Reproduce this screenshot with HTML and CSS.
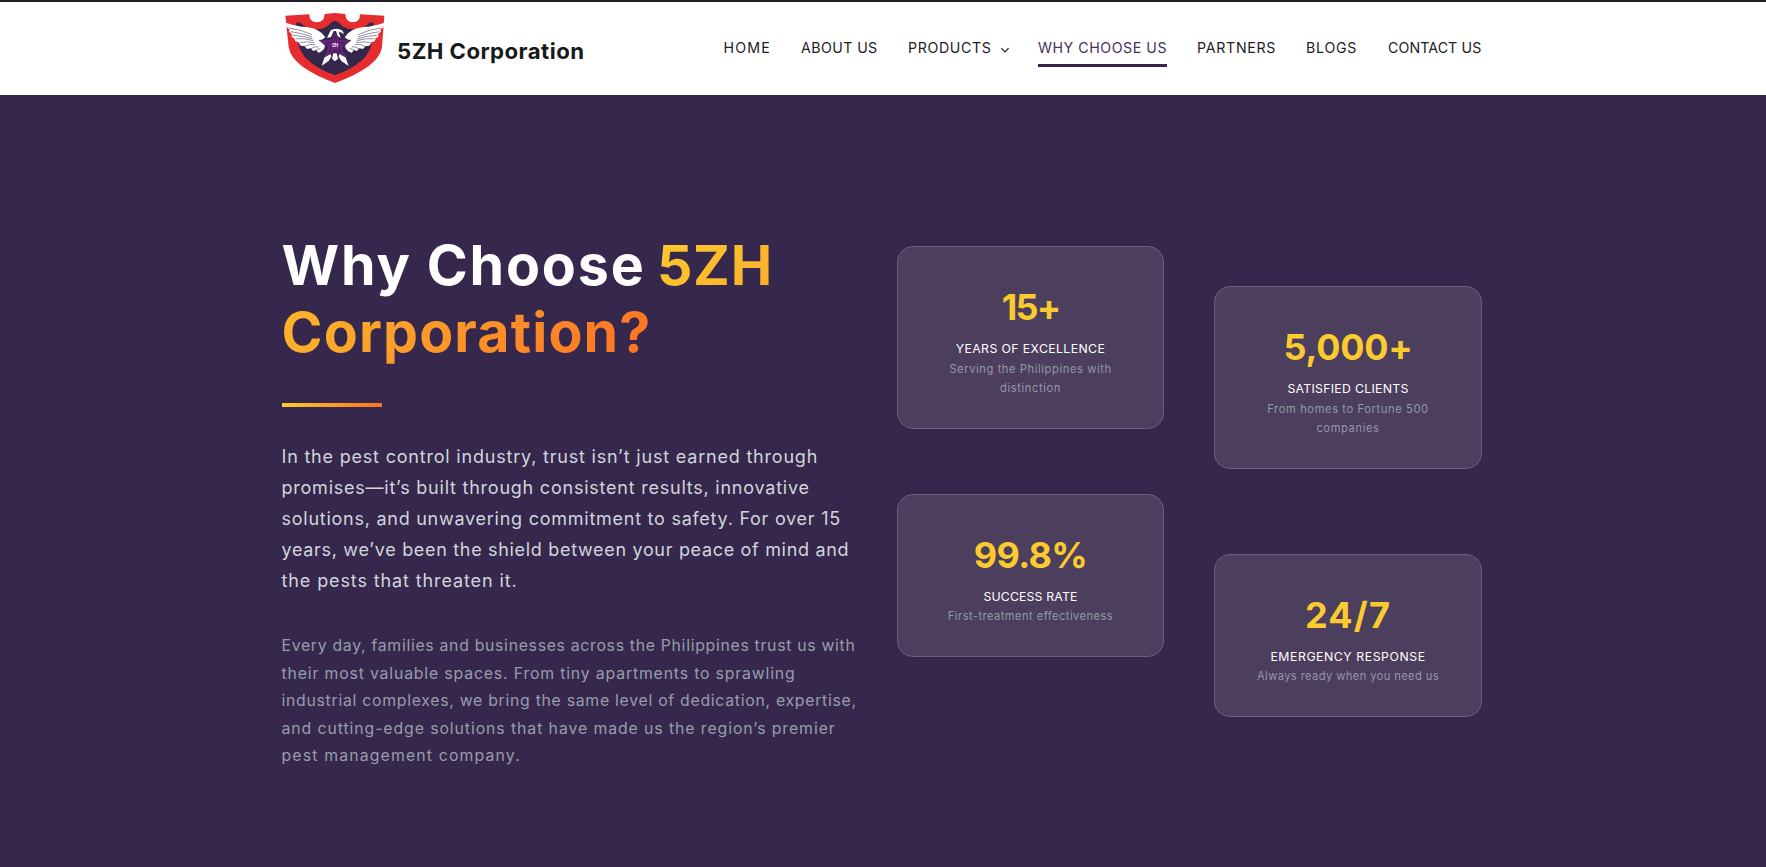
FILE: index.html
```html
<!DOCTYPE html>
<html lang="en">
<head>
<meta charset="utf-8">
<title>Why Choose Us – 5ZH Corporation</title>
<link rel="stylesheet" href="styles.css">
</head>
<body>
<header class="site-header">
  <div class="container header-row">
    <a class="brand">
      <svg class="logo" viewBox="45 39 300 210" aria-hidden="true">
        <path fill="#e52d30" d="M46 47 L118 43 Q118 67 140 67 Q163 67 164 42 L195 39 L226 42 Q227 67 249 67 Q270 67 270 43 L343 47 L336 141 Q328 200 195 249 Q64 200 56 141 Z"/>
        <path fill="#35264b" d="M78 68 L91 68 Q108 87 143 88 Q170 87 184 67 L195 62 L206 67 Q220 87 248 88 Q282 87 298 68 L311 68 L305 128 Q298 187 195 226 Q92 187 85 128 Z"/>
        <g id="wing">
          <path fill="#fff" d="M47 68 Q82 80 110 81 Q151 86 166 112 L156 119 L151 121 L165 138 L162 147 L153 155 L145 158 L138 150 L129 153 L122 145 L111 147 L103 138 L92 137 L85 126 L76 124 L72 114 L64 111 L66 103 L56 94 L60 90 L49 80 Z"/>
          <path class="feather" d="M57 84 Q95 89 126 104 M62 95 Q96 99 126 111 M69 106 Q100 107 128 117 M77 116 Q104 114 130 122 M89 128 Q110 123 132 128 M104 139 Q119 131 136 134 M122 147 Q132 139 145 140 M138 151 Q144 146 151 146"/>
        </g>
        <use href="#wing" transform="translate(390 0) scale(-1 1)"/>
        <path fill="#fff" d="M171 114 L182 91 Q196 82 213 89 Q221 92 221 103 Q215 96 206 96 L212 114 L203 108 L198 93 L191 93 L183 111 Z"/>
        <path fill="#fff" d="M167 162 L182 161 L184 170 L176 183 L155 197 Z M190 160 L200 160 L204 176 L195 184 L186 176 Z M208 161 L223 162 L236 198 L214 183 L206 170 Z"/>
        <path fill="#6f2380" stroke="#35264b" stroke-width="2" d="M195 97 L206 119 L243 121 L216 141 L226 171 L195 154 L164 171 L174 141 L147 121 L184 119 Z"/>
        <path fill="none" stroke="#3f1f56" stroke-width="3" d="M195 108 L201 127 L223 128 L207 140 L213 157 L195 148 L177 157 L183 140 L167 128 L189 127 Z"/>
        <text class="logo-mark" x="195" y="140" text-anchor="middle">ZH</text>
      </svg>
      <span class="brand-name">5ZH Corporation</span>
    </a>
    <nav class="nav">
      <a class="nav-link nav-home">HOME</a>
      <a class="nav-link nav-about">ABOUT US</a>
      <a class="nav-link nav-products">PRODUCTS<svg class="chevron" viewBox="0 0 10 8" aria-hidden="true"><path d="M1.4 2.2 L5 5.8 L8.6 2.2"/></svg></a>
      <a class="nav-link nav-why">WHY CHOOSE US</a>
      <a class="nav-link nav-partners">PARTNERS</a>
      <a class="nav-link nav-blogs">BLOGS</a>
      <a class="nav-link nav-contact">CONTACT US</a>
    </nav>
  </div>
</header>
<main class="hero">
  <div class="container hero-row">
    <section class="intro">
      <h1 class="title"><span class="title-lead">Why Choose</span> <span class="accent"><span class="accent-a">5ZH</span><br><span class="accent-b">Corporation?</span></span></h1>
      <div class="rule"></div>
      <p class="lead">
        <span class="line lead-1">In the pest control industry, trust isn’t just earned through</span>
        <span class="line lead-2">promises—it’s built through consistent results, innovative</span>
        <span class="line lead-3">solutions, and unwavering commitment to safety. For over 15</span>
        <span class="line lead-4">years, we’ve been the shield between your peace of mind and</span>
        <span class="line lead-5">the pests that threaten it.</span>
      </p>
      <p class="body-text">
        <span class="line body-1">Every day, families and businesses across the Philippines trust us with</span>
        <span class="line body-2">their most valuable spaces. From tiny apartments to sprawling</span>
        <span class="line body-3">industrial complexes, we bring the same level of dedication, expertise,</span>
        <span class="line body-4">and cutting-edge solutions that have made us the region’s premier</span>
        <span class="line body-5">pest management company.</span>
      </p>
    </section>
    <section class="stats">
      <article class="card card-years">
        <div class="number">15+</div>
        <div class="label">YEARS OF EXCELLENCE</div>
        <div class="desc">Serving the Philippines with<br>distinction</div>
      </article>
      <article class="card card-clients">
        <div class="number">5,000+</div>
        <div class="label">SATISFIED CLIENTS</div>
        <div class="desc">From homes to Fortune 500<br>companies</div>
      </article>
      <article class="card card-rate">
        <div class="number">99.8%</div>
        <div class="label">SUCCESS RATE</div>
        <div class="desc">First-treatment effectiveness</div>
      </article>
      <article class="card card-response">
        <div class="number">24/7</div>
        <div class="label">EMERGENCY RESPONSE</div>
        <div class="desc">Always ready when you need us</div>
      </article>
    </section>
  </div>
</main>
</body>
</html>
```
FILE: styles.css
```css
* { box-sizing: border-box; }
body {
  margin: 0;
  height: 867px;
  overflow: hidden;
  background: #36284c;
  font-family: Inter, "Open Sans", sans-serif;
}
.container { width: 1200px; margin: 0 auto; margin-left: 282px; }

/* Header */
.site-header { height: 95px; border-top: 2px solid #1d2024; background: #fff; }
.header-row { display: flex; justify-content: space-between; align-items: flex-start; }
.brand { display: flex; padding: 11px 0 0 3px; }
.logo { width: 100px; height: 70px; flex: none; }
.logo-mark { font: 700 13px Inter, sans-serif; fill: #fff; }
.feather { fill: none; stroke: #35264b; stroke-width: 1.6; }
.brand-name {
  margin: 23px 0 0 12px;
  font-size: 22.2px;
  line-height: 30px;
  font-weight: 700;
  letter-spacing: 0.45px;
  color: #17191a;
  white-space: nowrap;
}
.nav { display: flex; gap: 30px; padding-top: 36px; }
.nav-link {
  height: 29px;
  font-size: 14.2px;
  line-height: 20px;
  font-weight: 400;
  color: #1d2024;
  white-space: nowrap;
}
.nav-home { width: 47.5px; letter-spacing: 1.2px; }
.nav-about { width: 77px; letter-spacing: 0.42px; }
.nav-products { width: 100px; letter-spacing: 0.63px; }
.nav-why { width: 129px; letter-spacing: 0.54px; color: #43325b; border-bottom: 3px solid #36284c; }
.nav-partners { width: 79px; letter-spacing: 0.7px; }
.nav-blogs { width: 51px; letter-spacing: 0.75px; }
.nav-contact { width: 95px; padding-left: 1px; letter-spacing: 0.1px; }
.chevron { width: 10px; height: 8px; margin-left: 8px; vertical-align: -1px; }
.chevron path { fill: none; stroke: #1d2024; stroke-width: 1.2; }

/* Hero */
.hero-row { display: flex; justify-content: space-between; align-items: flex-start; }
.intro { width: 585px; padding-top: 136px; white-space: nowrap; }
.title { margin: 0 0 0 -0.5px; font-size: 55.5px; line-height: 67.2px; font-weight: 700; color: #fff; }
.title-lead { letter-spacing: 1.85px; margin-right: -1.8px; }
.accent {
  background: linear-gradient(135deg, #fbcb2e 0%, #fd6f25 100%);
  -webkit-background-clip: text;
  background-clip: text;
  color: transparent;
}
.accent-a { letter-spacing: 0.7px; }
.accent-b { letter-spacing: 1.15px; }
.rule { width: 100px; height: 4px; margin-top: 37.6px; background: linear-gradient(90deg, #fbcb2e, #fd6f25); }
.line { display: block; }
.lead { margin: 34.4px 0 0 -0.5px; font-size: 18px; line-height: 31px; color: #d1d5db; }
.lead-1 { letter-spacing: 0.797px; }
.lead-2 { letter-spacing: 0.769px; }
.lead-3 { letter-spacing: 0.745px; }
.lead-4 { letter-spacing: 0.68px; }
.lead-5 { letter-spacing: 0.888px; }
.body-text { margin: 35.8px 0 0 -0.5px; font-size: 15.8px; line-height: 27.5px; color: #969dab; }
.body-1 { letter-spacing: 0.7px; }
.body-2 { letter-spacing: 0.84px; }
.body-3 { letter-spacing: 0.722px; }
.body-4 { letter-spacing: 0.925px; }
.body-5 { letter-spacing: 1.16px; }

/* Stat cards */
.stats {
  width: 585px;
  padding-top: 151px;
  display: grid;
  grid-template-columns: 267px 268px;
  column-gap: 50px;
  row-gap: 25px;
  align-items: start;
}
.card {
  height: 183px;
  padding-top: 40px;
  border: 1px solid #6b5f7c;
  border-radius: 16px;
  background: #4c3e5d;
  text-align: center;
  white-space: nowrap;
}
.card-clients { margin-top: 40px; }
.card-rate { height: 163px; }
.card-response { height: 163px; margin-top: 60px; }
.number { font-size: 36px; line-height: 40.4px; font-weight: 700; color: #fbcb2e; }
.label { margin-top: 12px; font-size: 12.3px; line-height: 20px; font-weight: 400; color: #fff; }
.desc { margin-top: 0.6px; font-size: 11.2px; line-height: 19px; color: #9299a8; }
.card-years .number { letter-spacing: -1.8px; }
.card-years .label { letter-spacing: 0.38px; }
.card-years .desc { letter-spacing: 0.57px; }
.card-clients .number { letter-spacing: -0.24px; }
.card-clients .label { letter-spacing: 0.28px; }
.card-clients .desc { letter-spacing: 0.59px; }
.card-rate .number { letter-spacing: -0.66px; }
.card-rate .label { letter-spacing: 0.16px; }
.card-rate .desc { margin-top: -0.4px; letter-spacing: 0.43px; }
.card-response .number { letter-spacing: 1.19px; }
.card-response .label { letter-spacing: 0.54px; }
.card-response .desc { margin-top: -0.4px; letter-spacing: 0.38px; }
```
